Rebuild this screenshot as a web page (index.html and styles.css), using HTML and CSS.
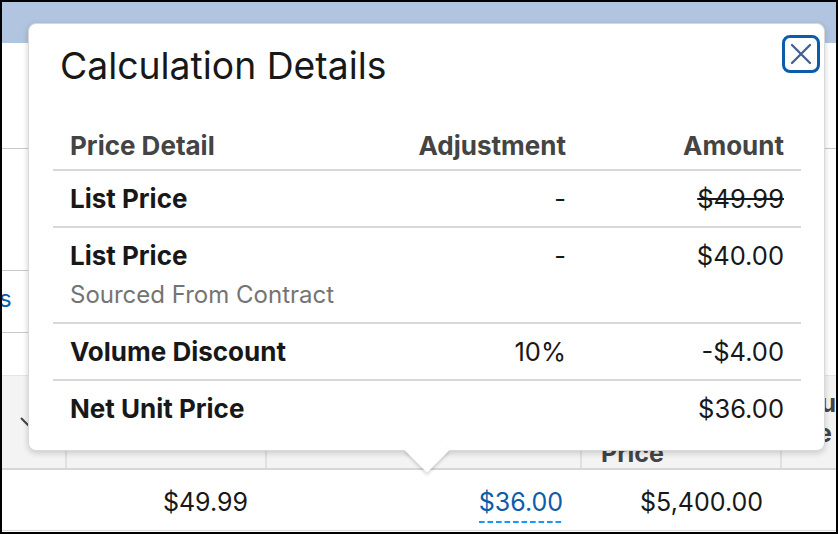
FILE: index.html
```html
<!DOCTYPE html>
<html lang="en">
<head>
<meta charset="utf-8">
<title>Calculation Details</title>
<link rel="stylesheet" href="styles.css">
</head>
<body>
<div class="frame">
  <div class="page">
    <div class="topbar"></div>
    <div class="upper">
      <div class="leftnav">
        <div class="ln ln-a"></div>
        <div class="ln ln-b"></div>
        <div class="ln ln-c"><span class="ln-text">s</span></div>
      </div>
      <div class="main">
        <div class="main-a"></div>
      </div>
    </div>
    <div class="bg-table">
      <div class="bg-head">
        <div class="bh c0"><svg class="chev" width="16" height="10" viewBox="0 0 16 10"><path d="M1 1 L8 8 L15 1" fill="none" stroke="#444" stroke-width="2"/></svg></div>
        <div class="bh"></div>
        <div class="bh"></div>
        <div class="bh bh-price"><span>Price</span></div>
        <div class="bh c4">Qu<br>Pe</div>
      </div>
      <div class="bg-row">
        <div class="bc"></div>
        <div class="bc">$49.99</div>
        <div class="bc"><span class="link">$36.00</span></div>
        <div class="bc">$5,400.00</div>
        <div class="bc"></div>
      </div>
    </div>
  </div>

  <section class="popover">
    <button class="close" aria-label="Close">
      <svg width="22" height="22" viewBox="0 0 22 22"><path d="M2 2 L20 20 M20 2 L2 20" stroke="#41618f" stroke-width="2.3" stroke-linecap="round" fill="none"/></svg>
    </button>
    <h2 class="title">Calculation Details</h2>
    <div class="ptable">
      <div class="prow phead">
        <div>Price Detail</div>
        <div class="r">Adjustment</div>
        <div class="r">Amount</div>
      </div>
      <div class="prow">
        <div class="b">List Price</div>
        <div class="r">-</div>
        <div class="r"><span class="strike">$49.99</span></div>
      </div>
      <div class="prow">
        <div>
          <div class="b">List Price</div>
          <div class="sub">Sourced From Contract</div>
        </div>
        <div class="r">-</div>
        <div class="r">$40.00</div>
      </div>
      <div class="prow">
        <div class="b">Volume Discount</div>
        <div class="r">10%</div>
        <div class="r">-$4.00</div>
      </div>
      <div class="prow last">
        <div class="b">Net Unit Price</div>
        <div class="r"></div>
        <div class="r">$36.00</div>
      </div>
    </div>
    <div class="nub"></div>
  </section>
</div>
</body>
</html>
```

FILE: styles.css
```css
html, body {
  margin: 0;
  padding: 0;
  background: #fff;
}

.frame {
  width: 838px;
  height: 534px;
  box-sizing: border-box;
  border: 2px solid #000;
  position: relative;
  overflow: hidden;
  background: #fff;
  font-family: Inter, "Noto Sans", "Liberation Sans", sans-serif;
  color: #181818;
}

.page {
  display: flex;
  flex-direction: column;
  height: 100%;
}

.topbar {
  height: 41px;
  flex: none;
  background: #b1c5e0;
}

.upper {
  height: 332px;
  flex: none;
  display: flex;
}

.leftnav {
  width: 26px;
  flex: none;
  overflow: hidden;
}

.ln {
  border-bottom: 1px solid #c9c9c9;
}

.ln-a { height: 105px; }
.ln-b { height: 121px; }
.ln-c {
  height: 51px;
  padding-top: 10px;
  font-size: 24px;
  line-height: 36px;
  color: #0b5cab;
}

.ln-text {
  display: inline-block;
  margin-left: -3px;
}

.main {
  flex: 1;
}

.main-a {
  height: 105px;
  border-bottom: 1px solid #c9c9c9;
}

.bg-head,
.bg-row {
  display: grid;
  grid-template-columns: 63px 200px 315px 200px 1fr;
}

.bg-head {
  height: 92px;
  border-top: 1px solid #e5e5e5;
  border-bottom: 2px solid #d6d6d6;
  background: #f3f3f3;
}

.bh {
  display: flex;
  align-items: center;
  padding: 0 19px;
  border-left: 2px solid #e0e0e0;
  font-size: 25px;
  font-weight: 700;
  line-height: 30px;
  color: #444;
  white-space: nowrap;
  overflow: hidden;
}

.bh-price {
  align-items: flex-end;
  padding-bottom: 0;
}

.bh.c4 {
  padding-bottom: 8px;
}

.bh.c0 {
  border-left: none;
  padding: 0 0 0 18px;
}

.chev {
  display: block;
}

.bg-row {
  height: 60px;
  border-bottom: 1px solid #dcdcdc;
}

.bc {
  text-align: right;
  padding: 14px 17px 0;
  font-size: 25px;
  line-height: 36px;
  color: #181818;
}

.link {
  color: #0b5cab;
  padding-bottom: 6px;
  background-image: linear-gradient(to right, #1b96ff 65%, transparent 65%);
  background-size: 8.5px 2px;
  background-repeat: repeat-x;
  background-position: 0 100%;
}

/* Popover */
.popover {
  position: absolute;
  left: 26px;
  top: 21px;
  width: 797px;
  box-sizing: border-box;
  padding: 18px 23px 14px 24px;
  background: #fff;
  border: 1px solid #d8d8d8;
  border-radius: 8px;
  box-shadow: 0 2px 6px rgba(0, 0, 0, 0.18);
}

.title {
  margin: 0 0 0 7px;
  font-size: 37.3px;
  font-weight: 400;
  line-height: 48px;
  color: #181818;
}

.close {
  position: absolute;
  top: 11px;
  right: 4px;
  width: 38px;
  height: 38px;
  box-sizing: border-box;
  padding: 0;
  border: 3px solid #0b5cab;
  border-radius: 8px;
  background: #fff;
  display: flex;
  align-items: center;
  justify-content: center;
}

.close svg {
  display: block;
}

.prow {
  display: grid;
  grid-template-columns: 1fr 218px 218px;
  padding: 10px 0 9px;
  border-bottom: 2px solid #d8d8d8;
  font-size: 25.5px;
  line-height: 36px;
}

.prow > div {
  padding: 0 17px;
}

.phead {
  padding: 38px 0 5px;
  font-size: 26px;
  font-weight: 700;
  color: #444;
}

.prow.last {
  border-bottom: none;
}

.b {
  font-size: 26px;
  font-weight: 700;
}

.r {
  text-align: right;
}

.strike {
  text-decoration: line-through;
}

.sub {
  margin-top: 3px;
  font-size: 24px;
  color: #747474;
}

.nub {
  position: absolute;
  left: 382px;
  bottom: -16px;
  width: 32px;
  height: 32px;
  background: #fff;
  transform: rotate(45deg);
  box-shadow: 2px 2px 3px rgba(0, 0, 0, 0.14);
}
```
